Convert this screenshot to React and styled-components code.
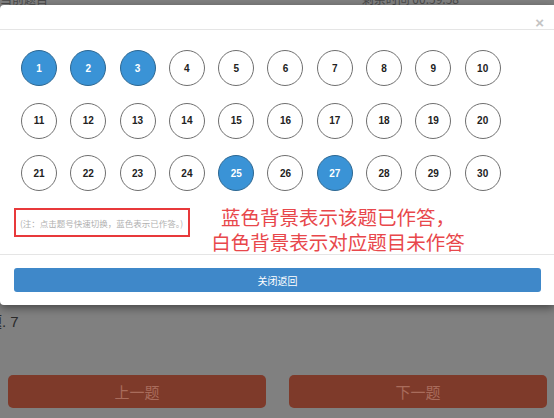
import React from "react";
import styled, { createGlobalStyle } from "styled-components";

const Global = createGlobalStyle`
  html, body {
    margin: 0;
    padding: 0;
    background: #808080;
    overflow: hidden;
    font-family: "Liberation Sans", Arial, "Noto Sans CJK SC", sans-serif;
  }
`;

const Page = styled.div`
  width: 554px;
  height: 418px;
  display: flex;
  flex-direction: column;
`;

const TopStrip = styled.div`
  height: 5px;
  overflow: hidden;
  display: flex;
  justify-content: space-between;
  padding: 0 95px 0 0;
  color: #4a4a4a;
  font-size: 12px;
  line-height: 12px;
  font-family: "Noto Sans CJK SC", sans-serif;
  span {
    margin-top: -7px;
  }
`;

const Modal = styled.div`
  background: #fff;
  border-radius: 4px 0 0 4px;
  box-shadow: 0 3px 9px rgba(0, 0, 0, 0.45);
  display: flex;
  flex-direction: column;
`;

const Header = styled.div`
  height: 24px;
  border-bottom: 1px solid #e5e5e5;
  display: flex;
  justify-content: flex-end;
  align-items: flex-end;
  padding-right: 10px;
`;

const Close = styled.span`
  color: #c4c4c4;
  font-size: 15px;
  line-height: 15px;
  font-weight: bold;
  margin-bottom: -1px;
`;

const Body = styled.div`
  padding: 20px 14px 0;
  display: flex;
  flex-direction: column;
`;

const Grid = styled.div`
  display: grid;
  grid-template-columns: repeat(10, 36px);
  column-gap: 13.3px;
  row-gap: 16.5px;
  padding-left: 7px;
`;

const Num = styled.div`
  width: 36px;
  height: 36px;
  box-sizing: border-box;
  border-radius: 50%;
  border: 1px solid ${(p) => (p.$done ? "#2d6791" : "#6f6f6f")};
  background: ${(p) => (p.$done ? "#3a93d6" : "#fff")};
  color: ${(p) => (p.$done ? "#fff" : "#222")};
  font-size: 10px;
  font-weight: bold;
  display: flex;
  align-items: center;
  justify-content: center;
`;

const NoteRow = styled.div`
  display: flex;
  align-items: flex-start;
  margin-top: 13px;
`;

const NoteBox = styled.div`
  width: 176px;
  height: 29px;
  box-sizing: border-box;
  border: 2.5px solid #e8393b;
  margin-top: 4px;
  display: flex;
  align-items: center;
  padding-left: 4px;
  color: #b0b0b0;
  font-size: 8.5px;
  white-space: nowrap;
  font-family: "Noto Sans CJK SC", sans-serif;
`;

const Remark = styled.div`
  width: 262px;
  margin-left: 17px;
  display: flex;
  flex-direction: column;
  align-items: center;
  color: #e8474b;
  font-size: 19.5px;
  font-family: "Noto Sans CJK SC", sans-serif;
`;

const RemarkLine = styled.span`
  height: 25px;
  line-height: 25px;
  white-space: nowrap;
`;

const Footer = styled.div`
  border-top: 1px solid #e5e5e5;
  padding: 13px 13px 13px 14px;
`;

const WideButton = styled.div`
  height: 24px;
  border-radius: 3px;
  background: #3f88c9;
  color: #fff;
  font-size: 10px;
  display: flex;
  align-items: center;
  justify-content: center;
  font-family: "Noto Sans CJK SC", sans-serif;
`;

const Answer = styled.div`
  margin-top: 7px;
  margin-left: -13px;
  color: #2a2a2a;
  font-size: 15px;
  line-height: 20px;
  font-family: "Liberation Sans", "Noto Sans CJK SC", sans-serif;
`;

const NavRow = styled.div`
  display: grid;
  grid-template-columns: 258px 258px;
  column-gap: 23px;
  padding: 0 7px 0 8px;
  margin-top: 43px;
`;

const NavButton = styled.div`
  height: 33px;
  border-radius: 5px;
  background: #7e3a2a;
  color: #a96c5c;
  font-size: 15px;
  display: flex;
  align-items: center;
  justify-content: center;
  font-family: "Noto Sans CJK SC", sans-serif;
`;

const answered = new Set([1, 2, 3, 25, 27]);
const numbers = Array.from({ length: 30 }, (_, i) => i + 1);

export default function App() {
  return (
    <Page>
      <Global />
      <TopStrip>
        <span>当前题目</span>
        <span>剩余时间 00:59:58</span>
      </TopStrip>
      <Modal>
        <Header>
          <Close>×</Close>
        </Header>
        <Body>
          <Grid>
            {numbers.map((n) => (
              <Num key={n} $done={answered.has(n)}>
                {n}
              </Num>
            ))}
          </Grid>
          <NoteRow>
            <NoteBox>(注：点击题号快速切换，蓝色表示已作答。)</NoteBox>
            <Remark>
              <RemarkLine>蓝色背景表示该题已作答，</RemarkLine>
              <RemarkLine>白色背景表示对应题目未作答</RemarkLine>
            </Remark>
          </NoteRow>
        </Body>
        <Footer>
          <WideButton>关闭返回</WideButton>
        </Footer>
      </Modal>
      <Answer>题. 7</Answer>
      <NavRow>
        <NavButton>上一题</NavButton>
        <NavButton>下一题</NavButton>
      </NavRow>
    </Page>
  );
}
